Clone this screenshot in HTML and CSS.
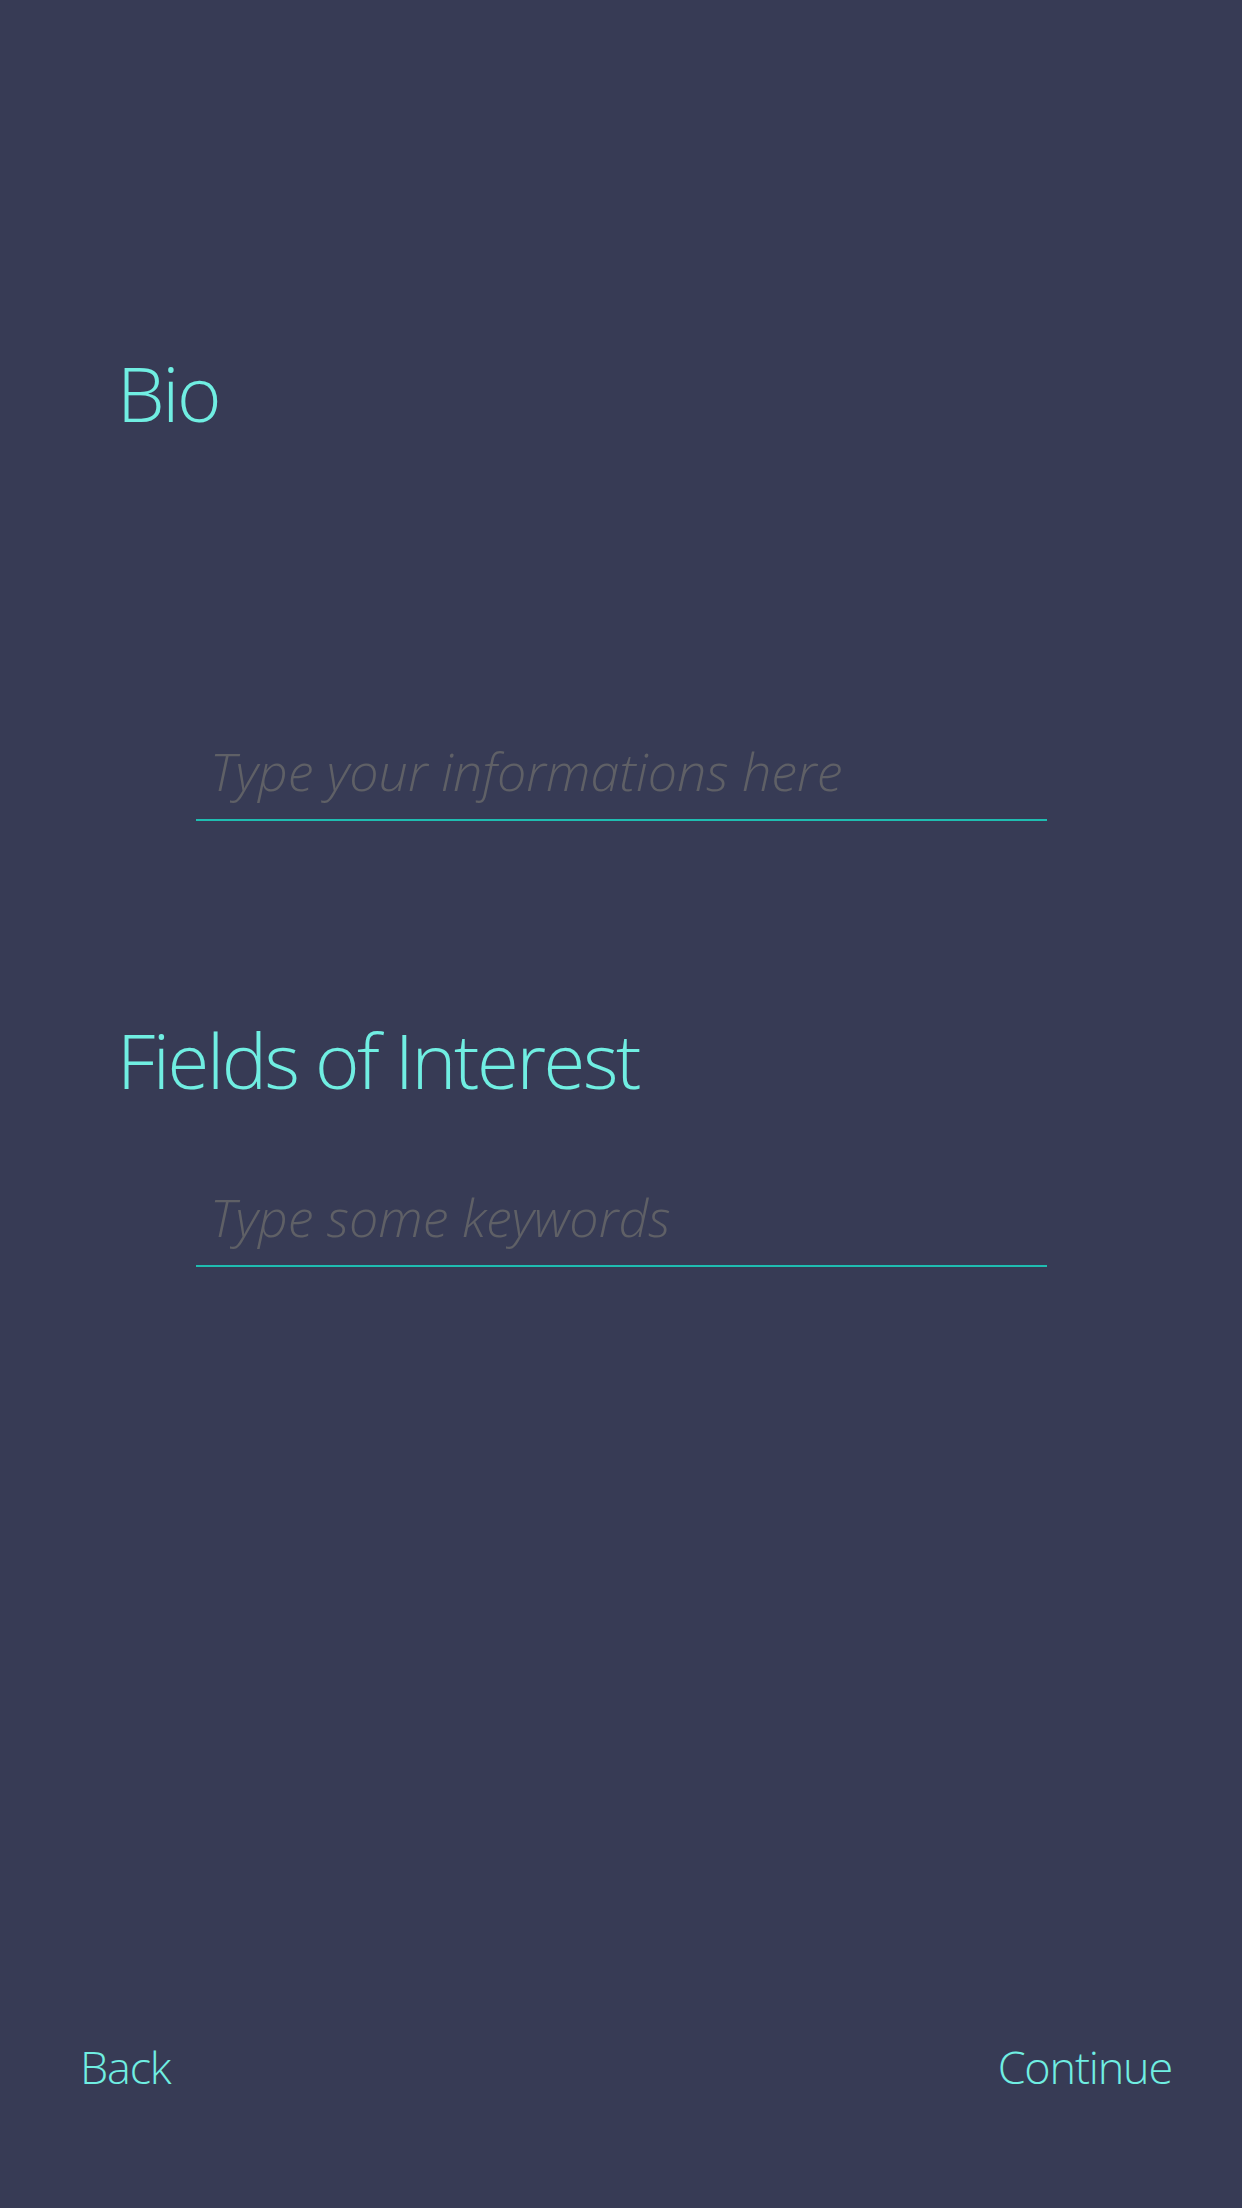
FILE: index.html
```html
<!DOCTYPE html>
<html>
<head>
<meta charset="utf-8">
<link rel="stylesheet" href="styles.css">
</head>
<body>
<div class="screen">
  <main class="content">
    <h2 class="title title-bio">Bio</h2>
    <div class="field field-bio">
      <input class="field-input" type="text" placeholder="Type your informations here">
    </div>
    <h2 class="title title-interest">Fields of Interest</h2>
    <div class="field field-interest">
      <input class="field-input" type="text" placeholder="Type some keywords">
    </div>
  </main>
  <footer class="nav">
    <a class="nav-link">Back</a>
    <a class="nav-link">Continue</a>
  </footer>
</div>
</body>
</html>
```

FILE: styles.css
```css
html, body {
  margin: 0;
  padding: 0;
  background: #373b55;
}
.screen {
  width: 1242px;
  height: 2208px;
  display: flex;
  flex-direction: column;
  font-family: "Open Sans", "Liberation Sans", sans-serif;
  color: #70eee2;
}
.content {
  flex: 1;
  display: flex;
  flex-direction: column;
  padding: 0 117px;
}
.title {
  margin: 0;
  font-weight: 300;
  font-size: 76px;
  line-height: 90px;
  letter-spacing: -2.4px;
  color: #70eee2;
}
.title-bio {
  margin-top: 348px;
}
.title-interest {
  margin-top: 194px;
}
.field {
  margin-left: 79px;
  width: 851px;
  border-bottom: 2px solid #1fbdb1;
}
.field-bio {
  margin-top: 297px;
}
.field-interest {
  margin-top: 76px;
}
.field-input {
  display: block;
  width: 100%;
  box-sizing: border-box;
  border: none;
  outline: none;
  background: transparent;
  padding: 0 0 14px 14px;
  height: 84px;
  font-family: "Open Sans", "Liberation Sans", sans-serif;
  font-weight: 300;
  font-style: italic;
  font-size: 52px;
  color: #5f6066;
}
.field-input::placeholder {
  color: #5f6066;
  opacity: 1;
}
.nav {
  display: flex;
  justify-content: space-between;
  padding: 0 70px 111px 80px;
}
.nav-link {
  font-weight: 300;
  font-size: 45px;
  line-height: 60px;
  letter-spacing: -1.2px;
  color: #70eee2;
}
```
